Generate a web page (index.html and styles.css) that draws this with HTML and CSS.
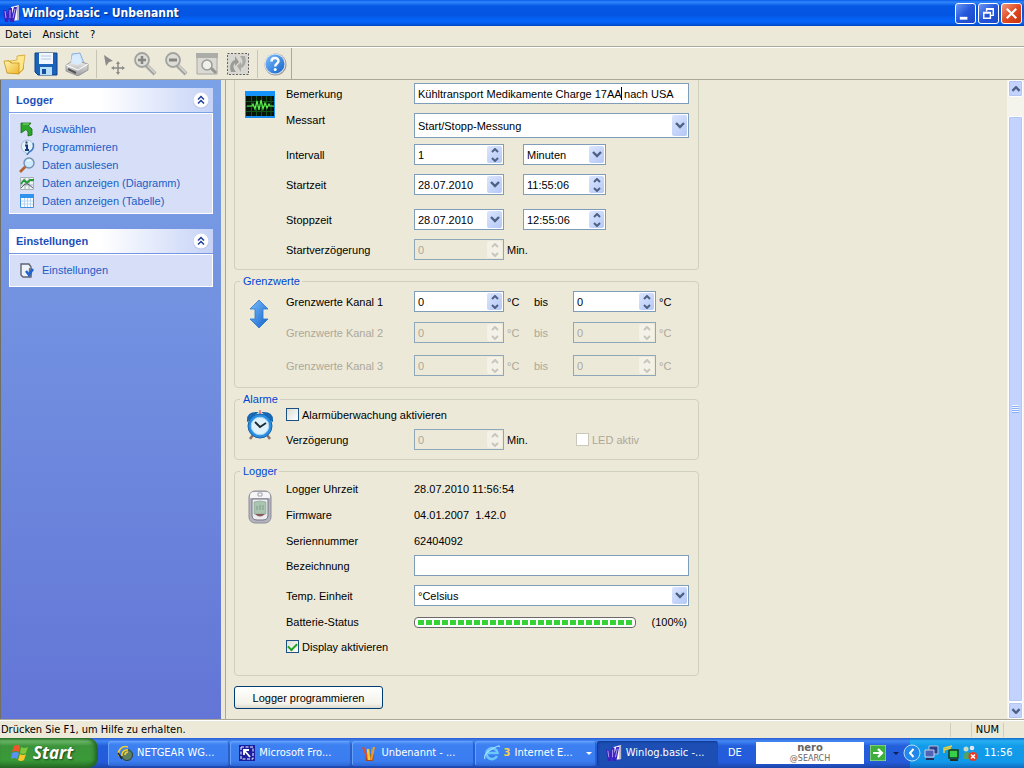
FILE: index.html
```html
<!DOCTYPE html>
<html lang="de">
<head>
<meta charset="utf-8">
<meta name="viewport" content="width=device-width, initial-scale=1">
<title>Winlog.basic - Unbenannt</title>
<link rel="stylesheet" href="styles.css">
</head>
<body>
<svg class="defs" width="0" height="0" aria-hidden="true">
  <defs>
    <linearGradient id="gFolder" x1="0" y1="0" x2="1" y2="1"><stop offset="0" stop-color="#fff6b0"/><stop offset="1" stop-color="#eeb52c"/></linearGradient>
    <linearGradient id="gBlue" x1="0" y1="0" x2="1" y2="1"><stop offset="0" stop-color="#7cc0ff"/><stop offset="1" stop-color="#1260c8"/></linearGradient>
    <linearGradient id="gGrey" x1="0" y1="0" x2="0" y2="1"><stop offset="0" stop-color="#f4f4f2"/><stop offset="1" stop-color="#9c9ca0"/></linearGradient>
    <symbol id="up" viewBox="0 0 8 5"><path d="M1 4 4 1 7 4" fill="none" stroke="currentColor" stroke-width="2"/></symbol>
    <symbol id="down" viewBox="0 0 8 5"><path d="M1 1 4 4 7 1" fill="none" stroke="currentColor" stroke-width="2"/></symbol>
    <symbol id="chev" viewBox="0 0 10 7"><path d="M1 1 5 5 9 1" fill="none" stroke="currentColor" stroke-width="2.4"/></symbol>
    <symbol id="collapse" viewBox="0 0 18 18"><circle cx="9" cy="9.500" r="8" fill="#b9c4e8"/><circle cx="9" cy="9" r="7.500" fill="#fff"/><path d="M6 8.500 9 5.500l3 3M6 12.500l3-3 3 3" fill="none" stroke="#1f3f9c" stroke-width="1.500"/></symbol>
    <symbol id="winlog" viewBox="0 0 17 17"><path d="M8 2 16 0v15l-7 1z" fill="#f4f4fb"/><path d="M16 0v15l-2 .5V1z" fill="#b8b8c8"/><path d="M0 5h3l1 5 2-7h3v6l2-7h3l-3 15H7l-1-5-1 5H2z" fill="#3b22c0"/><path d="M2 6l1 7M7 5l0 8M12 4l-2 9" stroke="#b8a0f8" stroke-width="1" fill="none"/></symbol>
  </defs>
</svg>
<div class="window">
  <header class="titlebar">
    <svg class="title-icon" viewBox="0 0 17 17"><use href="#winlog"/></svg>
    <h1 class="title">Winlog.basic - Unbenannt</h1>
    <div class="caption-buttons">
      <button class="cap" type="button" aria-label="Minimieren"><svg viewBox="0 0 20 20"><path d="M4 15h8" stroke="#fff" stroke-width="3"/></svg></button>
      <button class="cap" type="button" aria-label="Wiederherstellen"><svg viewBox="0 0 20 20"><path d="M8 8V5h7v7h-3M8 5.500h7" fill="none" stroke="#fff" stroke-width="1.500"/><path d="M5 9h7v6H5zM5 9.500h7" fill="none" stroke="#fff" stroke-width="1.500"/></svg></button>
      <button class="cap cap-close" type="button" aria-label="Schließen"><svg viewBox="0 0 20 20"><path d="M5 5l10 10M15 5 5 15" stroke="#fff" stroke-width="2.300"/></svg></button>
    </div>
  </header>

  <nav class="menubar">
    <button type="button">Datei</button><button type="button">Ansicht</button><button type="button">?</button>
  </nav>

  <div class="toolbar">
    <button type="button" aria-label="Öffnen"><svg viewBox="0 0 24 24"><path d="M3 9l3-1 1 2 7-2V4l7-1v14l-5 5L4 21z" fill="#e0a326"/><path d="M7 9 14 8V4l8-1-2 14-4 4z" fill="#ffe88a" stroke="#c9921d" stroke-width=".6"/><path d="M1 9h5l2 2h8v11L4 21z" fill="url(#gFolder)" stroke="#c9921d" stroke-width=".8"/></svg></button>
    <button type="button" aria-label="Speichern"><svg viewBox="0 0 24 24"><path d="M1 1h22v22H4l-3-3z" fill="#1c62b8" stroke="#0d4088"/><path d="M5 1h14v11H5z" fill="#f2f7ff"/><path d="M7 4h10M7 7h10" stroke="#b4c8e4"/><path d="M6 15h12v8H6z" fill="#b9def8"/><path d="M8 17h4v5H8z" fill="#14509c"/></svg></button>
    <button type="button" aria-label="Drucken"><svg viewBox="0 0 24 24"><path d="M6 11 7 2l8-1 4 10z" fill="#c8e2ff" stroke="#8fb0d8"/><path d="M1 13l8-5 14 4v6l-10 6L1 19z" fill="url(#gGrey)" stroke="#8a8a8e" stroke-width=".8"/><path d="M6 10.500 7 4l7-2 3 9-5 2z" fill="#d9ebff"/><path d="M1 13l12 5 10-6" fill="none" stroke="#fff"/><path d="M3 17l8 4" stroke="#555" stroke-width="2"/></svg></button>
    <span class="tool-sep"></span>
    <button type="button" aria-label="Zeiger"><svg viewBox="0 0 24 24"><path d="M2 3l9 6-4 1-3 4z" fill="#8a8a88"/><path d="M16 11v10M11 16h10" stroke="#8a8a88" stroke-width="1.500"/><path d="M14 12l2-3 2 3zM14 20l2 3 2-3zM12 14l-3 2 3 2zM20 14l3 2-3 2z" fill="#8a8a88"/></svg></button>
    <button type="button" aria-label="Vergrößern"><svg viewBox="0 0 24 24"><path d="M13 13l9 9" stroke="#a4a4a0" stroke-width="4"/><path d="M14 13l8 8" stroke="#d8d8d4" stroke-width="1.500"/><circle cx="9" cy="8" r="7" fill="#dddcd6" stroke="#a2a29e" stroke-width="1.800"/><path d="M9 4v8M5 8h8" stroke="#858582" stroke-width="2.500"/></svg></button>
    <button type="button" aria-label="Verkleinern"><svg viewBox="0 0 24 24"><path d="M13 13l9 9" stroke="#a4a4a0" stroke-width="4"/><path d="M14 13l8 8" stroke="#d8d8d4" stroke-width="1.500"/><circle cx="9" cy="8" r="7" fill="#dddcd6" stroke="#a2a29e" stroke-width="1.800"/><path d="M5 8h8" stroke="#858582" stroke-width="3"/></svg></button>
    <button type="button" aria-label="Alles anzeigen"><svg viewBox="0 0 24 24"><path d="M2 2h20v20H2z" fill="#dad9d3" stroke="#a8a8a4"/><path d="M1 1h22v5H1z" fill="#acaca8"/><path d="M15 15l6 6" stroke="#96968f" stroke-width="3"/><circle cx="12" cy="13" r="5" fill="#eeeeea" stroke="#9b9b97" stroke-width="1.500"/></svg></button>
    <button type="button" aria-label="Aktualisieren"><svg viewBox="0 0 24 24"><path d="M1.500 1.500h21v21h-21z" fill="#d8d7d2" stroke="#606060" stroke-dasharray="2 1.500"/><path d="M5 20c-2-6 0-11 4-12V4l4 6-4 4v-3c-3 3-1 6 1 9z" fill="#9a9a96"/><path d="M19 4c2 6 0 11-4 12v4l-4-6 4-4v3c3-3 1-6-1-9z" fill="#aaaaa6"/></svg></button>
    <span class="tool-sep"></span>
    <button type="button" aria-label="Hilfe"><svg viewBox="0 0 24 24"><circle cx="12.500" cy="12.500" r="11" fill="#9b9b98"/><circle cx="12" cy="12" r="10.500" fill="#dfe6ee"/><circle cx="12" cy="12" r="9.500" fill="url(#gBlue)"/><path d="M8.500 9.500C8.500 5 15.500 5 15.500 9c0 2.500-3.300 2.500-3.300 5.500" fill="none" stroke="#fff" stroke-width="2.400"/><circle cx="12.200" cy="17.500" r="1.500" fill="#fff"/></svg></button>
    <span class="tool-end"></span>
  </div>

  <div class="workspace">
    <aside class="sidebar">
      <section class="panel">
        <header class="panel-head"><h2>Logger</h2><button type="button" aria-label="Logger einklappen"><svg viewBox="0 0 18 18"><use href="#collapse"/></svg></button></header>
        <ul class="panel-body panel-body-long">
          <li><svg viewBox="0 0 16 16"><path d="M2 2h10L9.500 5l3.500 3v6l-4 1v-4L7 8.500 2 12z" fill="#2da52a" stroke="#176c18" stroke-width=".8"/><path d="M4 3h6" stroke="#8be07c"/></svg><a href="#auswaehlen">Auswählen</a></li>
          <li><svg viewBox="0 0 16 16"><path d="M8 1a7 6.500 0 0 1 2 12.500L8 16l-1-2.500A7 6.500 0 0 1 8 1z" fill="#e6f0fa" stroke="#a4bcd8"/><path d="M14 4q2 6-4 9l-2 3" fill="none" stroke="#3f78c0" stroke-width="1.500"/><path d="M7.500 2.500v2M6 6.500h2V11M6 11h4" stroke="#123a78" stroke-width="2" fill="none"/></svg><a href="#programmieren">Programmieren</a></li>
          <li><svg viewBox="0 0 16 16"><path d="M7 9l-6 6" stroke="#b5622d" stroke-width="2.600"/><circle cx="10" cy="6" r="5" fill="#cdeaff" stroke="#7590b0" stroke-width="1.400"/><path d="M8 4q2-2 4 0" stroke="#fff" fill="none"/></svg><a href="#auslesen">Daten auslesen</a></li>
          <li><svg viewBox="0 0 16 16"><path d="M1.500 2.500h13v12h-13zM6 2v12M10 2v12M2 6h12M2 10h12" fill="#eef4f4" stroke="#a5b0ba"/><path d="M2 9l3-4 3 3 3-3h4" stroke="#239c36" stroke-width="1.800" fill="none"/><path d="M2 13l4-4 3 0 5 4" stroke="#555f70" fill="none"/></svg><a href="#diagramm">Daten anzeigen (Diagramm)</a></li>
          <li><svg viewBox="0 0 16 16"><path d="M1.500 1.500h13v13h-13z" fill="#fff" stroke="#3e94e4"/><path d="M1 1h14v4H1z" fill="#2f93ee"/><path d="M5.500 5v9M8.500 5v9M11.500 5v9M2 8h12M2 11h12" stroke="#b8d6f4"/></svg><a href="#tabelle">Daten anzeigen (Tabelle)</a></li>
        </ul>
      </section>
      <section class="panel">
        <header class="panel-head"><h2>Einstellungen</h2><button type="button" aria-label="Einstellungen einklappen"><svg viewBox="0 0 18 18"><use href="#collapse"/></svg></button></header>
        <ul class="panel-body">
          <li><svg viewBox="0 0 16 16"><path d="M2 2h8l2 3v10H4l-2-2z" fill="#eef2fa" stroke="#5d6674" stroke-width="1.400"/><path d="M10 6h3v8l-4 2z" fill="#6d7686"/><path d="M7 9l3 4 4-6" stroke="#1c62d0" stroke-width="2.400" fill="none"/></svg><a href="#einstellungen">Einstellungen</a></li>
        </ul>
      </section>
    </aside>

    <main class="content">
      <form class="form">
        <div class="group group-cut">
          <svg class="group-icon icon-scope" viewBox="0 0 30 27"><path d="M.5.5h29v26H.5z" fill="#06140a" stroke="#1b8cf0"/><path d="M0 0h30v5H0z" fill="#1593fa"/><path d="M0 26h30" stroke="#1b8cf0" stroke-width="2"/><path d="M6.500 5v20M11.500 5v20M16.500 5v20M21.500 5v20M26 5v20M1 10.500h28M1 15.500h28M1 20.500h28" stroke="#13521b"/><path d="M2 15h5l1-2 2 5 2-8 2 9 2-10 2 9 2-6 2 5 2-4 1 2h4" fill="none" stroke="#5cf04c" stroke-width="1.200"/></svg>
          <div class="rows">
            <div class="row"><label for="bem">Bemerkung</label><span class="box wide"><input id="bem" type="text" value="Kühltransport Medikamente Charge 17AA nach USA"><i class="caret"></i></span></div>
            <div class="row row-tall"><label for="art">Messart</label><span class="box wide"><select id="art"><option>Start/Stopp-Messung</option></select><span class="arrow"><svg><use href="#chev"/></svg></span></span></div>
            <div class="row gap-6"><label for="int">Intervall</label><span class="box num"><input id="int" type="text" value="1"><span class="spin"><svg><use href="#up"/></svg><svg><use href="#down"/></svg></span></span><span class="box unit"><select id="intu" aria-label="Einheit"><option>Minuten</option></select><span class="arrow"><svg><use href="#chev"/></svg></span></span></div>
            <div class="row gap-9"><label for="sd">Startzeit</label><span class="box num"><input id="sd" type="text" value="28.07.2010"><span class="arrow"><svg><use href="#chev"/></svg></span></span><span class="box unit"><input type="text" aria-label="Startuhrzeit" value="11:55:06"><span class="spin"><svg><use href="#up"/></svg><svg><use href="#down"/></svg></span></span></div>
            <div class="row gap-14"><label for="ed">Stoppzeit</label><span class="box num"><input id="ed" type="text" value="28.07.2010"><span class="arrow"><svg><use href="#chev"/></svg></span></span><span class="box unit"><input type="text" aria-label="Stoppuhrzeit" value="12:55:06"><span class="spin"><svg><use href="#up"/></svg><svg><use href="#down"/></svg></span></span></div>
            <div class="row gap-9 row-limits"><label for="sv">Startverzögerung</label><span class="box num off"><input id="sv" type="text" value="0" disabled><span class="spin"><svg><use href="#up"/></svg><svg><use href="#down"/></svg></span></span><span>Min.</span></div>
          </div>
        </div>

        <fieldset class="group">
          <legend>Grenzwerte</legend>
          <svg class="group-icon icon-updown" viewBox="0 0 20 30"><path d="M10 1l9 9h-5v10h5l-9 9-9-9h5V10H1z" fill="url(#gBlue)" stroke="#2a78cc" stroke-width=".8"/></svg>
          <div class="rows">
            <div class="row row-limits"><label for="k1">Grenzwerte Kanal 1</label><span class="box num"><input id="k1" type="text" value="0"><span class="spin"><svg><use href="#up"/></svg><svg><use href="#down"/></svg></span></span><span>°C</span><span>bis</span><span class="box unit"><input type="text" aria-label="Kanal 1 bis" value="0"><span class="spin"><svg><use href="#up"/></svg><svg><use href="#down"/></svg></span></span><span>°C</span></div>
            <div class="row row-limits gap-10 dim"><label for="k2">Grenzwerte Kanal 2</label><span class="box num off"><input id="k2" type="text" value="0" disabled><span class="spin"><svg><use href="#up"/></svg><svg><use href="#down"/></svg></span></span><span>°C</span><span>bis</span><span class="box unit off"><input type="text" aria-label="Kanal 2 bis" value="0" disabled><span class="spin"><svg><use href="#up"/></svg><svg><use href="#down"/></svg></span></span><span>°C</span></div>
            <div class="row row-limits gap-12 dim"><label for="k3">Grenzwerte Kanal 3</label><span class="box num off"><input id="k3" type="text" value="0" disabled><span class="spin"><svg><use href="#up"/></svg><svg><use href="#down"/></svg></span></span><span>°C</span><span>bis</span><span class="box unit off"><input type="text" aria-label="Kanal 3 bis" value="0" disabled><span class="spin"><svg><use href="#up"/></svg><svg><use href="#down"/></svg></span></span><span>°C</span></div>
          </div>
        </fieldset>

        <fieldset class="group group-alarm">
          <legend>Alarme</legend>
          <svg class="group-icon icon-clock" viewBox="0 0 28 30"><path d="M7 25l-3 4M21 25l3 4" stroke="#8b7468" stroke-width="2.500"/><path d="M2 10q0-7 8-7zM26 10q0-7-8-7z" fill="#2384d8" stroke="#1865b0" stroke-width="2"/><path d="M14 0v4" stroke="#e08a8a" stroke-width="2"/><circle cx="14" cy="16" r="12" fill="#2a8fe0" stroke="#1763ac"/><circle cx="14" cy="16" r="8.800" fill="#dff2fc" stroke="#a4d4f4"/><path d="M9 12l5 5 6-4" fill="none" stroke="#1a2a34" stroke-width="1.800"/></svg>
          <div class="rows">
            <label class="check"><input type="checkbox">Alarmüberwachung aktivieren</label>
            <div class="row row-limits gap-6"><label for="vz">Verzögerung</label><span class="box num off"><input id="vz" type="text" value="0" disabled><span class="spin"><svg><use href="#up"/></svg><svg><use href="#down"/></svg></span></span><span>Min.</span><label class="check led dim"><input type="checkbox" disabled>LED aktiv</label></div>
          </div>
        </fieldset>

        <fieldset class="group group-last">
          <legend>Logger</legend>
          <svg class="group-icon icon-device" viewBox="0 0 24 34"><rect x="1" y="1" width="22" height="32" rx="6" fill="#b4b4c0" stroke="#8d8d98"/><path d="M2 6q0-4 4-4h12q4 0 4 4v2H2z" fill="#f5f5f7"/><path d="M10 3h4v3h-4z" fill="#fff" stroke="#8d8d96" stroke-width=".8"/><path d="M4 9h16v16q0 5-5 5H9q-5 0-5-5z" fill="#ededf1" stroke="#74747f"/><path d="M6 12q6-2 12 0v12H6z" fill="#a9c4b0" stroke="#8aa08f" stroke-width=".6"/><path d="M9 20v-4M12 15v5M15 15v5" stroke="#7c9f86"/><path d="M7 24q5 5 10 0z" fill="#8b5b5b"/></svg>
          <div class="rows rows-logger">
            <div class="row"><span>Logger Uhrzeit</span><output>28.07.2010 11:56:54</output></div>
            <div class="row gap-6"><span>Firmware</span><output>04.01.2007&nbsp; 1.42.0</output></div>
            <div class="row gap-6"><span>Seriennummer</span><output>62404092</output></div>
            <div class="row gap-4"><label for="bz">Bezeichnung</label><span class="box wide"><input id="bz" type="text"></span></div>
            <div class="row gap-9"><label for="te">Temp. Einheit</label><span class="box wide"><select id="te"><option>°Celsius</option></select><span class="arrow"><svg><use href="#chev"/></svg></span></span></div>
            <div class="row gap-6"><span>Batterie-Status</span><span class="battery"><span class="meter" role="progressbar" aria-valuenow="100" aria-label="Batterie-Status"><span class="meter-fill"></span></span><span>(100%)</span></span></div>
            <label class="check gap-6"><input type="checkbox" checked>Display aktivieren</label>
          </div>
        </fieldset>
        <button class="submit" type="button">Logger programmieren</button>
      </form>
      <div class="scrollbar" aria-hidden="true">
        <span class="sb-btn"><svg><use href="#up"/></svg></span>
        <span class="sb-thumb"><i></i></span>
        <span class="sb-btn"><svg><use href="#down"/></svg></span>
      </div>
    </main>
  </div>

  <footer class="statusbar"><span class="status-text">Drücken Sie F1, um Hilfe zu erhalten.</span><span class="status-cell status-empty"></span><span class="status-cell">NUM</span><span class="status-cell status-grip"></span></footer>
</div>

<div class="taskbar">
  <button class="start" type="button"><svg viewBox="0 0 18 18"><path d="M3 2q3-2 6 0L8 8Q5 6 1 8z" fill="#f0562a"/><path d="M10 3q3 2 7 0l-2 6q-3 2-6 0z" fill="#7ec83c"/><path d="M1 9q4-2 7 0l-2 6q-3-2-6 0z" fill="#5a93f4"/><path d="M9 10q3 2 6 0l-2 6q-3 2-6 0z" fill="#fcc52a"/></svg><span>Start</span></button>
  <div class="tasks">
    <button class="task" type="button"><svg viewBox="0 0 16 16"><circle cx="10" cy="10" r="5.500" fill="#5f7f62" stroke="#28402c"/><path d="M2 11a7 7 0 0 1 9-9M5 11a5 5 0 0 1 6-6M8 10a3 3 0 0 1 3-3" fill="none" stroke="#f2cf32" stroke-width="1.600"/><path d="M1 8l4 6" stroke="#222" stroke-width="1.500"/></svg><span>NETGEAR WG...</span></button>
    <button class="task" type="button"><svg viewBox="0 0 16 16"><path d="M0 0h16v16H0z" fill="#1a1fa0"/><path d="M2 2h12v12H2z" fill="none" stroke="#fff" stroke-dasharray="3 1.500"/><path d="M5 5l6 7M5 10V5h5" fill="none" stroke="#fff" stroke-width="1.800"/></svg><span>Microsoft Fro...</span></button>
    <button class="task" type="button"><svg viewBox="0 0 16 16"><path d="M4 9h9l-1 7H5z" fill="#a8481c"/><path d="M2 2l5 12" stroke="#e84a24" stroke-width="2"/><path d="M7 4l1 11" stroke="#f5cc38" stroke-width="2.500"/><path d="M13 2l-3 13" stroke="#f39a2c" stroke-width="2.200"/><path d="M11 3l-1 9" stroke="#6cbc58"/></svg><span>Unbenannt - ...</span></button>
    <button class="task" type="button"><svg viewBox="0 0 16 16"><path d="M13 11a5.500 5.500 0 1 1 .5-3H4" fill="none" stroke="#6cc8fa" stroke-width="2.600"/><path d="M1 14Q-1 9 8 4t7-2" fill="none" stroke="#a6e0ff" stroke-width="1.200"/></svg><b>3</b><span>Internet E...</span><i class="tri"></i></button>
    <button class="task task-active" type="button"><svg viewBox="0 0 17 17"><use href="#winlog"/></svg><span>Winlog.basic -...</span></button>
  </div>
  <span class="lang">DE</span>
  <button class="nero" type="button"><b>nero</b><span>@SEARCH</span></button>
  <button class="go" type="button" aria-label="Suchen"><svg viewBox="0 0 16 16"><path d="M0 0h16v16H0z" fill="#3caf3c" stroke="#bfe6b4"/><path d="M3 8h8M8 4l4 4-4 4" stroke="#fff" stroke-width="2.200" fill="none"/></svg></button>
  <i class="tri tri-dark"></i>
  <div class="tray">
    <button class="tray-toggle" type="button" aria-label="Symbole einblenden"><svg viewBox="0 0 18 18"><circle cx="9" cy="9" r="8" fill="#2187e8" stroke="#b5dcfa"/><path d="M10.500 5 7 9l3.500 4" stroke="#fff" stroke-width="2" fill="none"/></svg></button>
    <svg viewBox="0 0 16 16"><path d="M5 1h9v8H5z" fill="#2e3f8c" stroke="#b7c2dc"/><path d="M1 5h9v7H1z" fill="#5363b4" stroke="#c8d2e8"/><path d="M2 14h8" stroke="#26305c" stroke-width="2"/></svg>
    <svg viewBox="0 0 16 16"><path d="M6 5h9v8H6z" fill="#36d048" stroke="#183a1c" stroke-width="1.500"/><path d="M7 15h8" stroke="#20302a" stroke-width="2"/><path d="M1 8V3l8-2M1 5l7-2" stroke="#e8d23c" fill="none" stroke-width="1.400"/></svg>
    <svg viewBox="0 0 16 16"><circle cx="4" cy="4" r="2.500" fill="#c4dcc8"/><path d="M1 14q0-7 4-7t4 7z" fill="#4fa468"/><circle cx="10" cy="3" r="2.300" fill="#dfe8f0"/><path d="M8 9q3-5 6 0z" fill="#8fb0d8"/><circle cx="11" cy="11.500" r="4.500" fill="#e43a24"/><path d="M9 9.500l4 4M13 9.500l-4 4" stroke="#fff" stroke-width="1.500"/></svg>
    <time>11:56</time>
  </div>
</div>
</body>
</html>
```
FILE: styles.css
```css
* { box-sizing: border-box; }
html, body { height: 100%; margin: 0; }
body {
  display: flex;
  flex-direction: column;
  overflow: hidden;
  background: #ece9d8;
  color: #000;
  font: 11px/14px "Liberation Sans", Arial, sans-serif;
}
button, input, select { font: inherit; color: inherit; margin: 0; }
button { padding: 0; border: 0; background: none; }
svg { display: block; flex: none; }
.defs { position: absolute; }
.window { flex: 1; min-height: 0; display: flex; flex-direction: column; }

/* Title bar */
.titlebar {
  display: flex;
  align-items: center;
  height: 26px;
  flex: none;
  padding: 0 2px 0 3px;
  background: linear-gradient(#0a5be6 0, #2f86fb 2px, #0458e4 6px, #0355e2 15px, #0566fb 21px, #0560f0 23px, #0144c4 26px);
}
.title-icon { width: 17px; height: 17px; }
.title {
  flex: 1;
  margin: 0 0 0 2px;
  color: #fff;
  font: bold 12px/18px "DejaVu Sans Condensed", "DejaVu Sans", sans-serif;
  text-shadow: 1px 1px 1px #0a2d80;
}
.caption-buttons { display: flex; gap: 2px; }
.cap {
  width: 21px;
  height: 21px;
  border: 1px solid #fff;
  border-radius: 3px;
  background: linear-gradient(135deg, #6a96f4, #2456dc 50%, #1c48c8);
}
.cap svg { width: 19px; height: 19px; }
.cap-close { background: linear-gradient(135deg, #f09a80, #e04a22 50%, #c43410); }

/* Menu and toolbar */
.menubar {
  display: flex;
  gap: 11px;
  height: 21px;
  flex: none;
  padding: 0 5px;
  border-bottom: 1px solid #aca899;
  font-family: "DejaVu Sans Condensed", "DejaVu Sans", sans-serif;
}
.menubar button { height: 18px; }
.toolbar {
  display: flex;
  align-items: center;
  height: 33px;
  flex: none;
  padding-left: 3px;
  border-top: 1px solid #fff;
  border-bottom: 1px solid #aca899;
}
.toolbar button { width: 31px; }
.toolbar svg { width: 24px; height: 24px; }
.tool-sep { width: 1px; height: 28px; margin-right: 5px; background: #c9c5b4; }
.tool-end { align-self: stretch; width: 1px; margin-left: -3px; background: #aca899; }

/* Sidebar */
.workspace { flex: 1; min-height: 0; display: flex; }
.sidebar {
  width: 221px;
  flex: none;
  padding: 8px 8px 0;
  border-left: 1px solid #716f64;
  background: linear-gradient(#7ba2e7, #6375d6);
}
.panel { margin-bottom: 15px; }
.panel-head {
  display: flex;
  align-items: center;
  justify-content: space-between;
  height: 24px;
  padding: 0 3px 0 7px;
  background: linear-gradient(90deg, #fff 45%, #c6d3f7);
}
.panel-head h2 { margin: 0; font-size: 11px; line-height: 14px; color: #1c4fbc; }
.panel-head svg { width: 18px; height: 18px; }
.panel-body {
  list-style: none;
  margin: 1px 0 0;
  padding: 6px 9px 7px;
  border: 1px solid #fff;
  background: #d6dff7;
}
.panel-body-long { padding-bottom: 3px; }
.panel-body li { display: flex; align-items: center; gap: 7px; height: 18px; }
.panel-body svg { width: 16px; height: 16px; }
.panel-body a { color: #215dc6; text-decoration: none; }

/* Form area */
.content {
  flex: 1;
  min-width: 0;
  display: flex;
  justify-content: space-between;
  margin-left: 4px;
  padding-left: 8px;
  border-left: 1px solid #aca899;
}
.form { flex: 1; max-width: 465px; min-width: 0; }
.group {
  display: grid;
  grid-template-columns: 41px minmax(0, 1fr);
  margin: 4px 0 0;
  min-width: 0;
  padding: 3px 9px 11px 10px;
  border: 1px solid #d0d0bf;
  border-radius: 4px;
}
.group-cut { margin: 0; padding-bottom: 9px; border-top: 0; border-radius: 0 0 4px 4px; }
legend { height: 14px; margin-left: -5px; padding: 0 2px 0 3px; color: #0046d5; }
.group-icon { align-self: start; }
.icon-scope { width: 30px; height: 27px; margin-top: 8px; }
.icon-updown { width: 20px; height: 30px; margin: 8px 0 0 4px; }
.icon-clock { width: 28px; height: 30px; margin: 4px 0 0 1px; }
.icon-device { width: 24px; height: 34px; margin: 11px 0 0 3px; }
.row { display: grid; grid-template-columns: 128px 109px minmax(0, 1fr); align-items: center; min-height: 21px; }
.row-limits { grid-template-columns: 128px 93px 27px 39px 86px auto; }
.row > .wide, .battery { grid-column: 2 / -1; }
.row-tall { margin-top: 9px; }
.row-tall > label { align-self: start; }
.row-tall .box { height: 25px; }
.gap-4 { margin-top: 4px; }
.gap-6 { margin-top: 6px; }
.gap-9 { margin-top: 9px; }
.gap-10 { margin-top: 10px; }
.gap-12 { margin-top: 12px; }
.gap-14 { margin-top: 14px; }
.box {
  position: relative;
  display: flex;
  height: 21px;
  border: 1px solid #7f9db9;
  background: #fff;
}
.num { width: 90px; }
.unit { width: 83px; }
.box input, .box select {
  flex: 1;
  width: 100%;
  min-width: 0;
  padding: 0 3px;
  border: 0;
  outline: 0;
  appearance: none;
  background: transparent;
}
.caret { position: absolute; left: 206px; top: 3px; width: 1px; height: 13px; background: #000; }
.arrow, .spin {
  position: absolute;
  right: 1px;
  top: 1px;
  bottom: 1px;
  width: 15px;
  display: flex;
  flex-direction: column;
  align-items: center;
  justify-content: center;
  gap: 4px;
  border-radius: 2px;
  background: linear-gradient(135deg, #dbe5fe, #b4c8f6);
  color: #4d6185;
  pointer-events: none;
}
.arrow svg { width: 10px; height: 7px; }
.spin svg { width: 8px; height: 5px; }
.off { background: #ece9d8; color: #aca899; border-color: #8fa7bb; }
.off .spin { background: #f3f1e8; color: #c9c7ba; }
.dim { color: #aca899; }
.check { display: flex; align-items: center; gap: 3px; min-height: 17px; }
.check input {
  appearance: none;
  display: grid;
  place-items: center;
  width: 13px;
  height: 13px;
  border: 1px solid #1c5180;
  background: linear-gradient(135deg, #dcdcd7, #fff);
}
.check input:checked::before {
  content: "";
  width: 7px;
  height: 4px;
  margin-bottom: 2px;
  border: solid #21a121;
  border-width: 0 0 2px 2px;
  transform: rotate(-45deg);
}
.check input:disabled { border-color: #cac8bb; background: #fff; }
.led { grid-column: 5 / -1; margin-left: 3px; }
.group-alarm { padding-top: 0; padding-bottom: 9px; }
.rows-logger .row { min-height: 20px; }
.group-last { padding-top: 1px; padding-bottom: 20px; }
.battery { display: flex; align-items: center; justify-content: space-between; padding-right: 2px; }
.meter {
  width: 222px;
  height: 11px;
  padding: 2px 3px;
  border: 1px solid #686868;
  border-radius: 4px;
  background: #fff;
}
.meter-fill {
  display: block;
  height: 5px;
  background: repeating-linear-gradient(90deg, #36d336 0 6px, #fff 6px 8px);
}
.submit {
  width: 149px;
  height: 23px;
  margin-top: 10px;
  border: 1px solid #003c74;
  border-radius: 3px;
  background: linear-gradient(#fff, #f3f2ea 80%, #dcd8cc);
}

/* Scroll bar */
.scrollbar { display: flex; flex-direction: column; width: 17px; padding: 0 1px; background: #f4f3ec; }
.sb-btn, .sb-thumb {
  display: grid;
  place-items: center;
  border: 1px solid #fff;
  border-radius: 2px;
  background: #c3d3fd;
  box-shadow: inset 0 0 0 1px #b4c6f2;
  color: #4d6185;
}
.sb-btn { height: 17px; }
.sb-btn svg { width: 10px; height: 6px; }
.sb-thumb { flex: 1; margin-top: 19px; }
.sb-thumb i { width: 7px; height: 8px; background: repeating-linear-gradient(#eef4fe 0 1px, #8cb0f8 1px 2px); }

/* Status bar */
.statusbar {
  display: flex;
  align-items: center;
  height: 19px;
  flex: none;
  padding-top: 2px;
  border-top: 1px solid #aca899;
  box-shadow: inset 0 1px #fff;
  font-family: "DejaVu Sans Condensed", "DejaVu Sans", sans-serif;
}
.status-text { flex: 1; padding-left: 1px; }
.status-cell { padding: 0 4px; border-left: 1px solid #d0cdbd; }
.status-empty, .status-grip { width: 21px; height: 14px; }

/* Taskbar */
.taskbar {
  display: flex;
  align-items: center;
  height: 30px;
  flex: none;
  background: linear-gradient(#2a5bd0, #4288f4 3px, #245edb 8px, #245bdb 24px, #1c45a8);
  color: #fff;
  font-family: "DejaVu Sans Condensed", "DejaVu Sans", sans-serif;
}
.start {
  display: flex;
  align-items: center;
  gap: 4px;
  width: 98px;
  height: 30px;
  padding-left: 11px;
  border-radius: 0 10px 10px 0;
  background: linear-gradient(#2f7d2e, #6cb86a 3px, #3c943a 8px, #3a9a38 22px, #276c26);
  box-shadow: inset -3px 0 4px #226022;
  font: italic bold 17px/24px "Open Sans", sans-serif;
  text-shadow: 1px 1px 2px #1a3e1a;
}
.start svg { width: 18px; height: 18px; }
.tasks { flex: 1; display: flex; min-width: 0; gap: 1px; padding-left: 10px; }
.task {
  display: flex;
  align-items: center;
  flex: 1 1 0;
  min-width: 0;
  gap: 4px;
  height: 25px;
  padding: 0 4px 0 9px;
  border-radius: 3px;
  background: linear-gradient(#5c9cfa, #3c80f2 4px, #3b7df0 20px, #2e66d4);
  box-shadow: inset 1px 1px #66a2fa, inset -1px 0 #2c60c8;
  white-space: nowrap;
}
.task svg { width: 16px; height: 16px; }
.task b { color: #ffd24a; }
.task-active { background: #1c4eb4; box-shadow: inset 1px 1px 2px #12398c; }
.tri { width: 0; border: 3px solid transparent; border-top-color: #fff; border-bottom: 0; }
.task .tri { margin-left: auto; }
.lang { width: 38px; padding-left: 10px; }
.nero {
  display: flex;
  flex-direction: column;
  align-items: center;
  justify-content: center;
  width: 108px;
  height: 22px;
  background: #fff;
  color: #666;
  font: 8px/10px "DejaVu Sans", sans-serif;
}
.nero b { font-size: 10px; line-height: 12px; }
.go { margin: 0 7px 0 6px; }
.go svg { width: 16px; height: 16px; }
.tri-dark { border-top-color: #0c2058; margin-right: 11px; }
.tray {
  display: flex;
  align-items: center;
  gap: 3px;
  width: 114px;
  height: 30px;
  background: linear-gradient(#1068c8, #28b0f4 3px, #129be8 8px, #1198ea 24px, #0f6cc0);
}
.tray > svg { width: 16px; height: 16px; }
.tray-toggle { margin-left: -7px; }
.tray-toggle svg { width: 18px; height: 18px; }
.tray time { margin-left: 3px; }
```
